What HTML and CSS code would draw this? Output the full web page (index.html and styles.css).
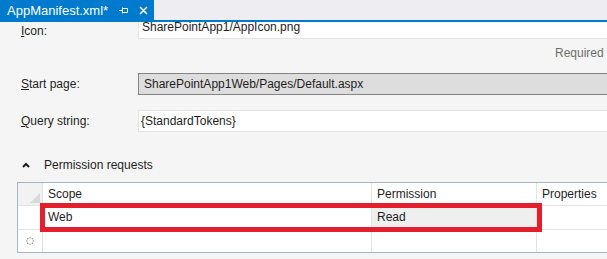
FILE: index.html
```html
<!DOCTYPE html>
<html lang="en">
<head>
  <meta charset="UTF-8">
  <title>AppManifest.xml</title>
  <link rel="stylesheet" href="styles.css">
</head>
<body>

<div class="tabbar">
  <div class="tab">
    <span class="tab-title">AppManifest.xml*</span>
    <svg class="tab-pin" width="9" height="7" viewBox="0 0 9 7">
      <path d="M0 3.5h3M3.5 0.5v6M3.5 1.5h5v4h-5" fill="none" stroke="#fff" stroke-width="1"/>
    </svg>
    <svg class="tab-close" width="9" height="9" viewBox="0 0 9 9">
      <path d="M1 1l7 7M8 1l-7 7" stroke="#fff" stroke-width="1.5"/>
    </svg>
  </div>
</div>

<div class="designer">
  <div class="field-row first">
    <label class="field-label"><u>I</u>con:</label>
    <div class="field icon-field">SharePointApp1/AppIcon.png</div>
  </div>

  <div class="hint">Required settings are marked with *</div>

  <div class="field-row">
    <label class="field-label"><u>S</u>tart page:</label>
    <div class="field readonly">SharePointApp1Web/Pages/Default.aspx</div>
  </div>

  <div class="field-row">
    <label class="field-label"><u>Q</u>uery string:</label>
    <div class="field">{StandardTokens}</div>
  </div>

  <div class="section-head">
    <svg class="chevron" width="8" height="6" viewBox="0 0 8 6">
      <path d="M1 5l3-3 3 3" fill="none" stroke="#1e1e1e" stroke-width="2"/>
    </svg>
    <span>Permission requests</span>
  </div>

  <div class="grid-wrap">
    <div class="grid">
      <div class="cell rowhead corner"><span class="corner-tri"></span></div>
      <div class="cell">Scope</div>
      <div class="cell">Permission</div>
      <div class="cell">Properties</div>

      <div class="cell rowhead"></div>
      <div class="cell">Web</div>
      <div class="cell selected">Read</div>
      <div class="cell"></div>

      <div class="cell rowhead last">
        <svg width="8" height="8" viewBox="0 0 8 8">
          <g fill="#8a8a8a">
            <circle cx="4" cy="0.8" r="0.7"/>
            <circle cx="6.3" cy="1.7" r="0.7"/>
            <circle cx="7.2" cy="4" r="0.7"/>
            <circle cx="6.3" cy="6.3" r="0.7"/>
            <circle cx="4" cy="7.2" r="0.7"/>
            <circle cx="1.7" cy="6.3" r="0.7"/>
            <circle cx="0.8" cy="4" r="0.7"/>
            <circle cx="1.7" cy="1.7" r="0.7"/>
          </g>
        </svg>
      </div>
      <div class="cell last"></div>
      <div class="cell last"></div>
      <div class="cell last"></div>
    </div>
    <div class="highlight"></div>
  </div>
</div>

</body>
</html>
```

FILE: styles.css
```css
* {
  box-sizing: border-box;
}

body {
  margin: 0;
  width: 607px;
  height: 259px;
  overflow: hidden;
  background: #f5f5f5;
  color: #1e1e1e;
  font-family: "Liberation Sans", Arial, sans-serif;
  font-size: 12px;
}

.tabbar {
  display: flex;
  height: 22px;
  background: #eeeef2;
  border-bottom: 2px solid #007acc;
}

.tab {
  display: flex;
  align-items: center;
  height: 20px;
  padding: 1px 6px 0 7px;
  background: #007acc;
  color: #fff;
  font-size: 13px;
}

.tab-title {
  margin-right: 11px;
}

.tab-close {
  margin-left: 11px;
}

.designer {
  width: 760px;
}

.field-row {
  display: flex;
  margin-top: 13px;
}

.field-row + .field-row {
  margin-top: 15px;
}

.field-label {
  width: 138px;
  padding-left: 21px;
  line-height: 22px;
}

.field {
  flex: 1;
  height: 22px;
  padding-left: 2px;
  line-height: 20px;
  background: #fff;
  border: 1px solid #e3e3e3;
  border-right: none;
}

.field-row.first {
  margin-top: 0;
}

.field-row.first .field-label {
  line-height: 18px;
}

.icon-field {
  height: 17px;
  padding-left: 3px;
  line-height: 11px;
  border-top: none;
}

.readonly {
  padding-left: 5px;
  background: #dddddd;
  border-color: #848484;
}

.hint {
  margin: 6px 0 0 555px;
  line-height: 14px;
  color: #6d6d6d;
  white-space: nowrap;
}

.section-head {
  display: flex;
  align-items: center;
  height: 16px;
  margin-top: 25px;
  padding-left: 22px;
}

.chevron {
  margin-right: 14px;
}

.grid-wrap {
  position: relative;
  margin: 9px 0 0 17px;
}

.grid {
  display: grid;
  grid-template-columns: 25px 329px 165px 200px;
  grid-template-rows: 23px 24px 22px;
  background: #fff;
  border: 1px solid #a6b5c6;
  border-right: none;
}

.cell {
  padding-left: 5px;
  line-height: 23px;
  border-right: 1px solid #e3e3e3;
  border-bottom: 1px solid #e3e3e3;
  white-space: nowrap;
}

.cell.last {
  border-bottom: none;
}

.rowhead {
  padding: 0;
  display: flex;
  align-items: center;
  justify-content: center;
}

.corner {
  position: relative;
  background: #f2f2f2;
}

.corner-tri {
  position: absolute;
  right: 2px;
  bottom: 2px;
  width: 10px;
  height: 10px;
  background: #d9d9d9;
  clip-path: polygon(100% 0, 100% 100%, 0 100%);
}

.selected {
  background: #efefef;
}

.highlight {
  position: absolute;
  left: 23px;
  top: 21px;
  width: 502px;
  height: 29px;
  border: 5px solid #e41f2b;
}
```
